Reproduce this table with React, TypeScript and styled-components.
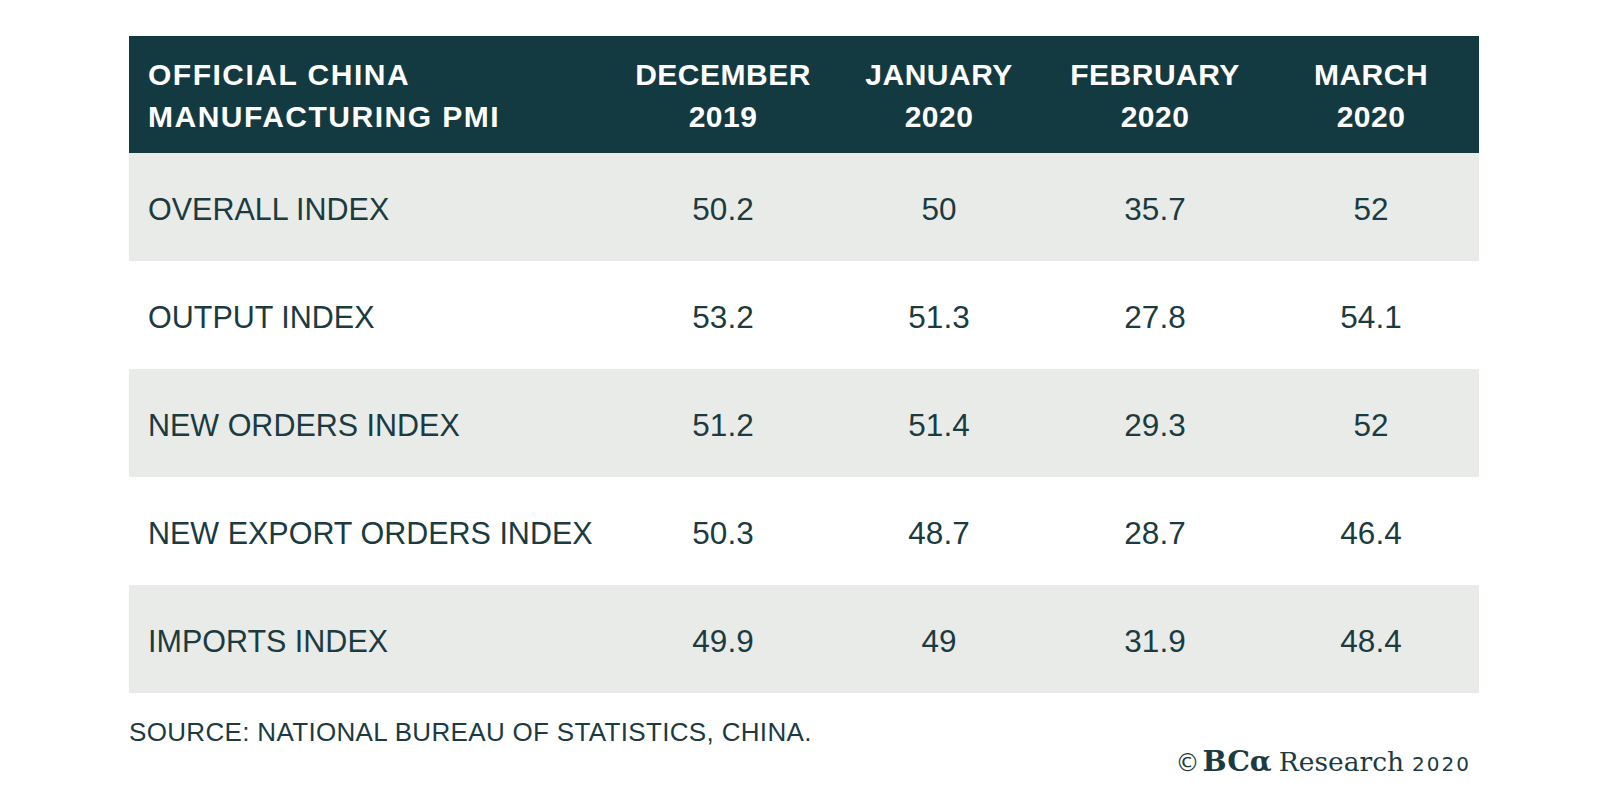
import styled, { createGlobalStyle } from "styled-components";

type PmiRow = {
  label: string;
  values: string[];
};

const months = [
  ["DECEMBER", "2019"],
  ["JANUARY", "2020"],
  ["FEBRUARY", "2020"],
  ["MARCH", "2020"],
];

const rows: PmiRow[] = [
  { label: "OVERALL INDEX", values: ["50.2", "50", "35.7", "52"] },
  { label: "OUTPUT INDEX", values: ["53.2", "51.3", "27.8", "54.1"] },
  { label: "NEW ORDERS INDEX", values: ["51.2", "51.4", "29.3", "52"] },
  { label: "NEW EXPORT ORDERS INDEX", values: ["50.3", "48.7", "28.7", "46.4"] },
  { label: "IMPORTS INDEX", values: ["49.9", "49", "31.9", "48.4"] },
];

const GlobalStyle = createGlobalStyle`
  body {
    margin: 0;
    background: #ffffff;
    font-family: "Liberation Sans", Arial, sans-serif;
  }
`;

const Page = styled.div`
  width: 1350px;
  margin: 36px 0 0 129px;
  color: #1b3b41;
`;

const Table = styled.div`
  display: flex;
  flex-direction: column;
`;

const HeaderRow = styled.div`
  display: grid;
  grid-template-columns: 486px repeat(4, 1fr);
  background: #143a41;
  color: #ffffff;
  padding: 18px 0 15px 0;
  font-weight: 700;
  font-size: 30px;
  line-height: 42px;
  letter-spacing: 0.5px;
`;

const HeaderLabel = styled.div`
  padding-left: 19px;
  letter-spacing: 1.5px;
`;

const HeaderMonth = styled.div`
  text-align: center;
`;

const Row = styled.div<{ $shaded: boolean }>`
  display: grid;
  grid-template-columns: 486px repeat(4, 1fr);
  align-items: center;
  height: 108px;
  padding-top: 5px;
  box-sizing: border-box;
  background: ${(props) => (props.$shaded ? "#e9ebe8" : "#ffffff")};
`;

const RowLabel = styled.div`
  padding-left: 19px;
  font-size: 30.5px;
`;

const RowValue = styled.div`
  text-align: center;
  font-size: 31.5px;
`;

const Footer = styled.div`
  display: flex;
  justify-content: space-between;
  align-items: flex-start;
  padding-right: 8px;
`;

const Source = styled.div`
  margin-top: 24px;
  font-size: 26px;
  line-height: 30px;
  letter-spacing: 0.33px;
`;

const Credit = styled.div`
  margin-top: 53px;
  display: flex;
  align-items: baseline;
  line-height: 30px;
  font-family: "DejaVu Serif", "Liberation Serif", serif;
  font-size: 26.5px;
  white-space: nowrap;
`;

const CopyMark = styled.span`
  font-family: "DejaVu Sans", sans-serif;
  font-size: 24px;
  margin-right: 3px;
`;

const Brand = styled.span`
  font-weight: 700;
  font-size: 28.5px;
  margin-right: 7px;
`;

const Year = styled.span`
  font-family: "DejaVu Sans", sans-serif;
  font-size: 20px;
  letter-spacing: 2px;
  margin-left: 8px;
`;

export default function App() {
  return (
    <>
      <GlobalStyle />
      <Page>
        <Table>
          <HeaderRow>
            <HeaderLabel>
              OFFICIAL CHINA
              <br />
              MANUFACTURING PMI
            </HeaderLabel>
            {months.map(([month, year]) => (
              <HeaderMonth key={month}>
                {month}
                <br />
                {year}
              </HeaderMonth>
            ))}
          </HeaderRow>
          {rows.map((row, index) => (
            <Row key={row.label} $shaded={index % 2 === 0}>
              <RowLabel>{row.label}</RowLabel>
              {row.values.map((value, i) => (
                <RowValue key={i}>{value}</RowValue>
              ))}
            </Row>
          ))}
        </Table>
        <Footer>
          <Source>SOURCE: NATIONAL BUREAU OF STATISTICS, CHINA.</Source>
          <Credit>
            <CopyMark>©</CopyMark>
            <Brand>BCα</Brand>
            Research
            <Year>2020</Year>
          </Credit>
        </Footer>
      </Page>
    </>
  );
}
